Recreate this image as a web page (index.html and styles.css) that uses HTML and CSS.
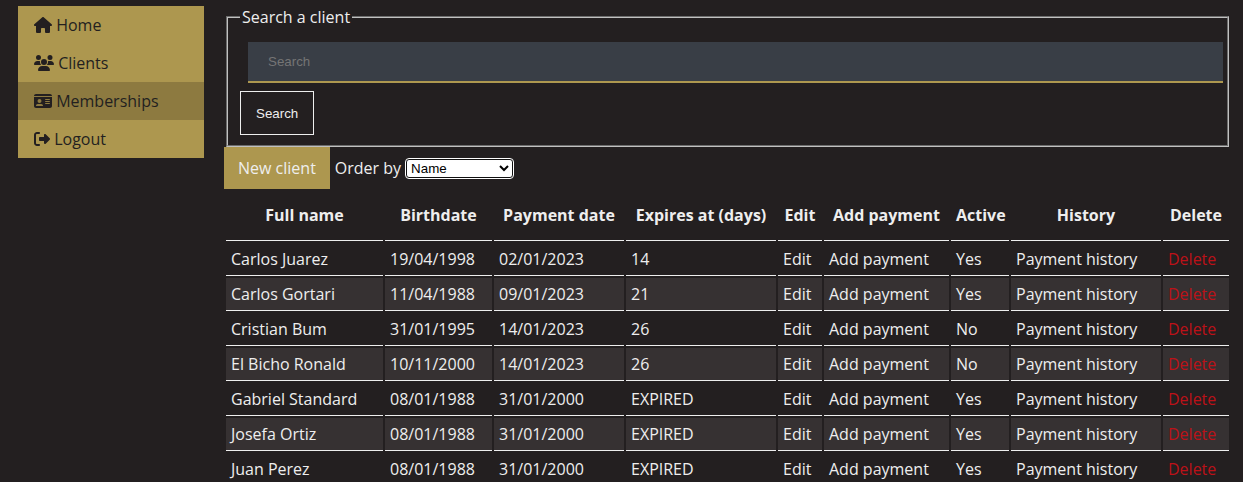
FILE: index.html
```
<!DOCTYPE html>
<html lang="en">
<head>
<meta charset="utf-8">
<title>Memberships</title>
<link rel="stylesheet" href="styles.css">
</head>
<body>
<div class="layout">
  <nav class="sidebar">
    <a class="nav-link" href="#"><svg class="icon icon-home" viewBox="0 0 576 512"><path d="M575.8 255.500c0 18-15 32.100-32 32.100h-32l.7 160.200c0 2.700-.2 5.400-.5 8.100V472c0 22.100-17.900 40-40 40H456c-1.100 0-2.200 0-3.300-.1c-1.400 .1-2.800 .1-4.200 .1H416 392c-22.100 0-40-17.900-40-40V448 384c0-17.700-14.300-32-32-32H256c-17.700 0-32 14.300-32 32v64 24c0 22.100-17.900 40-40 40H160 128.100c-1.500 0-3-.1-4.500-.2c-1.200 .1-2.400 .2-3.600 .2H104c-22.100 0-40-17.900-40-40V360c0-.9 0-1.900 .1-2.800V287.600H32c-18 0-32-14-32-32.100c0-9 3-17 10-24L266.400 8c7-7 15-8 22-8s15 2 21 7L564.800 231.500c8 7 12 15 11 24z"/></svg> Home</a>
    <a class="nav-link" href="#"><svg class="icon icon-users" viewBox="0 0 640 512"><path d="M144 0a80 80 0 1 1 0 160A80 80 0 1 1 144 0zM512 0a80 80 0 1 1 0 160A80 80 0 1 1 512 0zM0 298.700C0 239.800 47.800 192 106.700 192h42.700c15.900 0 31 3.500 44.600 9.700c-1.300 7.200-1.900 14.700-1.900 22.300c0 38.200 16.800 72.500 43.300 96H21.300C9.600 320 0 310.400 0 298.700zM405.300 320h-.7c26.600-23.500 43.300-57.800 43.300-96c0-7.600-.7-15-1.900-22.300c13.600-6.300 28.700-9.700 44.600-9.700h42.700C592.200 192 640 239.800 640 298.700c0 11.800-9.600 21.300-21.300 21.300H405.300zM224 224a96 96 0 1 1 192 0a96 96 0 1 1-192 0zM128 485.300C128 411.700 187.700 352 261.300 352H378.700C452.300 352 512 411.700 512 485.300c0 14.700-11.900 26.700-26.700 26.700H154.700c-14.700 0-26.700-11.900-26.700-26.700z"/></svg> Clients</a>
    <a class="nav-link active" href="#"><svg class="icon icon-card" viewBox="0 0 576 512"><path fill-rule="evenodd" d="M0 96l576 0c0-35.300-28.700-64-64-64H64C28.700 32 0 60.700 0 96zm0 32V416c0 35.300 28.700 64 64 64H512c35.300 0 64-28.700 64-64V128H0zM64 405.300c0-29.500 23.900-53.300 53.300-53.300H234.700c29.500 0 53.300 23.900 53.300 53.300c0 5.900-4.800 10.700-10.700 10.700H74.700c-5.900 0-10.700-4.800-10.700-10.700zM176 192a64 64 0 1 1 0 128a64 64 0 1 1 0-128zm176 16c0-8.800 7.200-16 16-16H496c8.800 0 16 7.200 16 16s-7.200 16-16 16H368c-8.800 0-16-7.200-16-16zm0 64c0-8.800 7.200-16 16-16H496c8.800 0 16 7.200 16 16s-7.200 16-16 16H368c-8.800 0-16-7.200-16-16zm0 64c0-8.800 7.200-16 16-16H496c8.800 0 16 7.200 16 16s-7.200 16-16 16H368c-8.800 0-16-7.200-16-16z"/></svg> Memberships</a>
    <a class="nav-link" href="#"><svg class="icon icon-logout" viewBox="0 0 512 512"><path d="M502.600 278.600c12.500-12.500 12.500-32.800 0-45.300l-128-128c-9.200-9.200-22.900-11.900-34.900-6.900s-19.800 16.600-19.800 29.600v64H192c-17.700 0-32 14.300-32 32v64c0 17.700 14.300 32 32 32H320v64c0 12.900 7.800 24.600 19.800 29.600s25.700 2.200 34.900-6.900l128-128zM160 96c17.700 0 32-14.300 32-32s-14.300-32-32-32H96C43 32 0 75 0 128V384c0 53 43 96 96 96h64c17.700 0 32-14.300 32-32s-14.300-32-32-32H96c-17.700 0-32-14.300-32-32V128c0-17.700 14.300-32 32-32h64z"/></svg> Logout</a>
  </nav>
  <main class="content">
    <form>
      <fieldset class="search-box">
        <legend>Search a client</legend>
        <input class="search-input" type="text" placeholder="Search" aria-label="Search a client">
        <button class="search-button" type="button">Search</button>
      </fieldset>
    </form>
    <div class="toolbar">
      <a class="new-client" href="#">New client</a>
      <label for="order">Order by</label>
      <select class="order" id="order"><option>Name</option><option>Payment date</option></select>
    </div>
    <table class="clients">
      <colgroup>
        <col class="col-name"><col class="col-birth"><col class="col-paid"><col class="col-expires"><col class="col-edit"><col class="col-add"><col class="col-active"><col class="col-history"><col class="col-delete">
      </colgroup>
      <thead>
        <tr><th>Full name</th><th>Birthdate</th><th>Payment date</th><th>Expires at (days)</th><th>Edit</th><th>Add payment</th><th>Active</th><th>History</th><th>Delete</th></tr>
      </thead>
      <tbody>
        <tr><td>Carlos Juarez</td><td>19/04/1998</td><td>02/01/2023</td><td>14</td><td><a href="#">Edit</a></td><td><a href="#">Add payment</a></td><td>Yes</td><td><a href="#">Payment history</a></td><td><a class="delete" href="#">Delete</a></td></tr>
        <tr><td>Carlos Gortari</td><td>11/04/1988</td><td>09/01/2023</td><td>21</td><td><a href="#">Edit</a></td><td><a href="#">Add payment</a></td><td>Yes</td><td><a href="#">Payment history</a></td><td><a class="delete" href="#">Delete</a></td></tr>
        <tr><td>Cristian Bum</td><td>31/01/1995</td><td>14/01/2023</td><td>26</td><td><a href="#">Edit</a></td><td><a href="#">Add payment</a></td><td>No</td><td><a href="#">Payment history</a></td><td><a class="delete" href="#">Delete</a></td></tr>
        <tr><td>El Bicho Ronald</td><td>10/11/2000</td><td>14/01/2023</td><td>26</td><td><a href="#">Edit</a></td><td><a href="#">Add payment</a></td><td>No</td><td><a href="#">Payment history</a></td><td><a class="delete" href="#">Delete</a></td></tr>
        <tr><td>Gabriel Standard</td><td>08/01/1988</td><td>31/01/2000</td><td>EXPIRED</td><td><a href="#">Edit</a></td><td><a href="#">Add payment</a></td><td>Yes</td><td><a href="#">Payment history</a></td><td><a class="delete" href="#">Delete</a></td></tr>
        <tr><td>Josefa Ortiz</td><td>08/01/1988</td><td>31/01/2000</td><td>EXPIRED</td><td><a href="#">Edit</a></td><td><a href="#">Add payment</a></td><td>Yes</td><td><a href="#">Payment history</a></td><td><a class="delete" href="#">Delete</a></td></tr>
        <tr><td>Juan Perez</td><td>08/01/1988</td><td>31/01/2000</td><td>EXPIRED</td><td><a href="#">Edit</a></td><td><a href="#">Add payment</a></td><td>Yes</td><td><a href="#">Payment history</a></td><td><a class="delete" href="#">Delete</a></td></tr>
      </tbody>
    </table>
  </main>
</div>
</body>
</html>
```
FILE: styles.css
```
* { box-sizing: border-box; }
html { scrollbar-width: none; }
body {
  margin: 0;
  background: #231f20;
  color: #eeeeee;
  font-family: "Open Sans", "Noto Sans", sans-serif;
  font-size: 16px;
  line-height: 22px;
}
a { color: inherit; text-decoration: none; }
.layout {
  display: grid;
  grid-template-columns: 186px 1fr;
  gap: 20px;
  align-items: start;
  padding: 6px 12px 0 18px;
}
.sidebar { background: #ad974f; color: #231f20; }
.nav-link { display: block; padding: 8px 16px; }
.nav-link.active { background: #8d7a40; }
.icon { height: 16px; vertical-align: -2px; fill: currentColor; }
.icon-home, .icon-card { width: 18px; }
.icon-users { width: 20px; }
.icon-logout { width: 16px; }
.search-box {
  margin: 0 2px;
  padding: 6px 12px 10px;
  border: 2px groove #c0c0c0;
}
.search-box legend { padding: 0 2px; }
.search-input, .search-button, .order { font-family: "Liberation Sans", Arial, sans-serif; }
.search-input {
  display: block;
  width: 100%;
  height: 41px;
  margin: 8px;
  padding: 0 20px;
  border: 0;
  border-bottom: 2px solid #ad974f;
  background: #393e46;
  color: #eeeeee;
}
.search-input::placeholder { color: #757575; }
.search-button {
  display: block;
  height: 44px;
  padding: 0 15px;
  border: 1px solid #eeeeee;
  background: transparent;
  color: #eeeeee;
}
.toolbar { display: flex; align-items: center; gap: 5px; }
.new-client { padding: 10px 14px; background: #ad974f; }
.order {
  width: 107px;
  height: 19px;
  border: 1px solid #101010;
  border-radius: 3px;
  outline: 1px solid #ffffff;
  background: #ffffff;
  color: #000000;
}
.clients { width: 100%; table-layout: fixed; border-spacing: 2px; }
.col-name { width: 157px; }
.col-birth { width: 107px; }
.col-paid { width: 130px; }
.col-expires, .col-history { width: 150px; }
.col-edit { width: 44px; }
.col-add { width: 125px; }
.col-active { width: 58px; }
.col-delete { width: 66px; }
.clients th { padding: 13px 5px 14px; border-bottom: 1px solid #eeeeee; white-space: nowrap; }
.clients td { padding: 5px; border-bottom: 1px solid #eeeeee; }
.clients tbody tr:nth-child(even) td { background: #363132; }
.clients .delete { color: #bd1118; }
```
